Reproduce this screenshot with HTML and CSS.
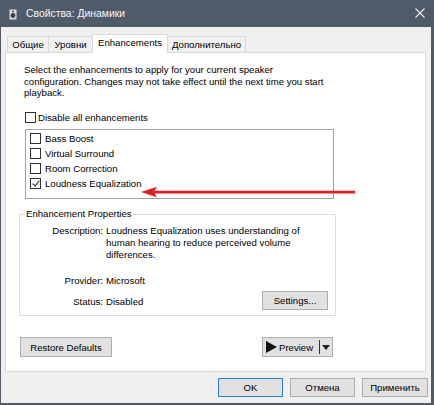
FILE: index.html
```html
<!DOCTYPE html>
<html lang="ru">
<head>
  <meta charset="UTF-8">
  <title>Свойства: Динамики</title>
  <link rel="stylesheet" href="styles.css">
</head>
<body>
  <div class="window">
    <div class="titlebar">
      <svg class="app-icon" width="8" height="11" viewBox="0 0 8 11">
        <rect x="0.5" y="0.5" width="7" height="10" rx="1" fill="#d6d9dd" stroke="#9aa1aa"/>
        <circle cx="4" cy="6.5" r="2.4" fill="#3a3f46"/>
        <circle cx="4" cy="2.4" r="0.9" fill="#3a3f46"/>
      </svg>
      <span class="title">Свойства: Динамики</span>
      <svg class="close" width="10" height="10" viewBox="0 0 10 10">
        <path d="M0.5 0.5 L9.5 9.5 M9.5 0.5 L0.5 9.5" stroke="#e8ebee" stroke-width="1.1"/>
      </svg>
    </div>

    <div class="tabs">
      <div class="tab tab-general">Общие</div>
      <div class="tab tab-levels">Уровни</div>
      <div class="tab tab-enh active">Enhancements</div>
      <div class="tab tab-adv">Дополнительно</div>
    </div>

    <div class="panel">
      <p class="intro">Select the enhancements to apply for your current speaker<br>configuration. Changes may not take effect until the next time you start<br>playback.</p>

      <div class="check disable-all"><span class="box"></span>Disable all enhancements</div>

      <div class="list">
        <div class="check item"><span class="box"></span>Bass Boost</div>
        <div class="check item"><span class="box"></span>Virtual Surround</div>
        <div class="check item"><span class="box"></span>Room Correction</div>
        <div class="check item"><span class="box checked"></span>Loudness Equalization</div>
      </div>

      <fieldset class="props">
        <legend>Enhancement Properties</legend>
        <div class="prop-row">
          <span class="prop-label">Description:</span>
          <span class="prop-value">Loudness Equalization uses understanding of<br>human hearing to reduce perceived volume<br>differences.</span>
        </div>
        <div class="prop-row provider">
          <span class="prop-label">Provider:</span>
          <span class="prop-value">Microsoft</span>
        </div>
        <div class="prop-row status">
          <span class="prop-label">Status:</span>
          <span class="prop-value">Disabled</span>
          <button class="btn settings">Settings...</button>
        </div>
      </fieldset>

      <div class="actions">
        <button class="btn restore">Restore Defaults</button>
        <button class="btn preview">
          <span class="play"></span>
          <span class="preview-text">Preview</span>
          <span class="split"></span>
          <span class="drop"></span>
        </button>
      </div>

      <!-- pointer to the selected option -->
      <svg class="arrow" width="216" height="14" viewBox="0 0 216 14">
        <path d="M0 7 L16 1.8 L13.5 5.8 L214 5.8 L214 8.4 L13.5 8.4 L16 12.2 Z" fill="#e31b23"/>
      </svg>
    </div>

    <div class="footer">
      <button class="btn dlg ok">OK</button>
      <button class="btn dlg">Отмена</button>
      <button class="btn dlg">Применить</button>
    </div>
  </div>
</body>
</html>
```

FILE: styles.css
```css
:root {
  --frame: #505b69;
  --face: #f0f0f0;
  --tab-border: #d9d9d9;
  --btn-bg: #e1e1e1;
  --btn-border: #adadad;
  --focus: #2f7dc8;
  --text: #000000;
}

* {
  box-sizing: border-box;
}

body {
  margin: 0;
  font-family: "Liberation Sans", Arial, sans-serif;
  font-size: 9.6px;
  color: var(--text);
  background: var(--face);
}

.window {
  width: 434px;
  height: 405px;
  background: var(--face);
  border-left: 1px solid var(--frame);
  border-right: 3px solid var(--frame);
  border-bottom: 2px solid var(--frame);
  overflow: hidden;
}

/* title bar */
.titlebar {
  height: 27px;
  background: var(--frame);
  display: flex;
  align-items: center;
  padding-left: 8px;
  color: #ffffff;
}

.app-icon {
  display: block;
  margin-top: 1px;
}

.title {
  margin-left: 9px;
  font-size: 10.4px;
  color: #f4f6f8;
}

.close {
  margin-left: auto;
  margin-right: 6px;
  margin-top: -1px;
}

/* tabs */
.tabs {
  display: flex;
  align-items: flex-end;
  height: 25px;
  padding-left: 6px;
  position: relative;
  z-index: 1;
}

.tab {
  height: 16px;
  line-height: 15px;
  border: 1px solid var(--tab-border);
  border-bottom: none;
  background: var(--face);
  text-align: center;
  margin-right: -1px;
}

.tab-general { width: 42px; }
.tab-levels { width: 45px; }
.tab-enh { width: 76px; }
.tab-adv { width: 79px; }

.tab.active {
  height: 19px;
  line-height: 16px;
  background: #ffffff;
  margin-bottom: -1px;
  position: relative;
}

/* main panel */
.panel {
  position: relative;
  margin-left: 4px;
  width: 421px;
  height: 320px;
  background: #ffffff;
  border: 1px solid var(--tab-border);
  padding-top: 11px;
}

.intro {
  margin: 0 0 0 18px;
  line-height: 11.7px;
  white-space: nowrap;
}

.check {
  display: flex;
  align-items: center;
  white-space: nowrap;
}

.box {
  width: 11px;
  height: 11px;
  border: 1px solid #333333;
  background: #ffffff;
  position: relative;
  flex: none;
}

.box.checked::after {
  content: "";
  position: absolute;
  left: 3px;
  top: 0px;
  width: 3px;
  height: 6px;
  border-right: 1px solid #222222;
  border-bottom: 1px solid #222222;
  transform: rotate(40deg);
}

.disable-all {
  margin: 13px 0 0 19px;
  height: 11px;
}

.disable-all .box {
  margin-right: 2px;
}

.list {
  margin: 6px 0 0 19px;
  width: 309px;
  height: 70px;
  border: 1px solid #a3a3a3;
  padding: 1px 0 0 4px;
}

.item {
  height: 15px;
}

.item .box {
  margin-right: 4px;
}

/* properties group */
.props {
  margin: 9px 0 0 13px;
  width: 317px;
  border: 1px solid #dcdcdc;
  padding: 5px 7px 5px 0;
  min-inline-size: 0;
}

.props legend {
  padding: 0 1px;
  margin-left: 5px;
  line-height: 12px;
}

.prop-row {
  display: flex;
  line-height: 12px;
  white-space: nowrap;
}

.prop-label {
  width: 83px;
  text-align: right;
  flex: none;
}

.prop-value {
  margin-left: 3px;
}

.provider {
  margin-top: 14px;
}

.status {
  margin-top: 4px;
  align-items: center;
}

.status .prop-label,
.status .prop-value {
  padding-top: 2px;
}

/* buttons */
.btn {
  font-family: inherit;
  font-size: 9.6px;
  font-weight: normal;
  color: var(--text);
  background: var(--btn-bg);
  border: 1px solid var(--btn-border);
  border-radius: 0;
  padding: 0;
  margin: 0;
}

.settings {
  margin-left: auto;
  width: 66px;
  height: 19px;
}

.actions {
  display: flex;
  justify-content: space-between;
  margin: 21px 0 0 14px;
  width: 313px;
}

.restore {
  width: 92px;
  height: 20px;
}

.preview {
  width: 71px;
  height: 20px;
  display: flex;
  align-items: center;
  padding-left: 3px;
}

.play {
  width: 0;
  height: 0;
  border-top: 6px solid transparent;
  border-bottom: 6px solid transparent;
  border-left: 11px solid #111111;
}

.preview-text {
  margin-left: 2px;
}

.split {
  width: 1px;
  height: 14px;
  background: #333333;
  margin-left: 6px;
}

.drop {
  width: 0;
  height: 0;
  border-left: 4px solid transparent;
  border-right: 4px solid transparent;
  border-top: 5px solid #222222;
  margin-left: 2px;
}

.arrow {
  position: absolute;
  left: 135px;
  top: 132px;
}

/* dialog buttons */
.footer {
  display: flex;
  justify-content: flex-end;
  gap: 7px;
  margin-top: 6px;
  padding-right: 3px;
}

.dlg {
  width: 65px;
  height: 19px;
}

.dlg:last-child {
  width: 66px;
}

.ok {
  border-color: var(--focus);
}
```
